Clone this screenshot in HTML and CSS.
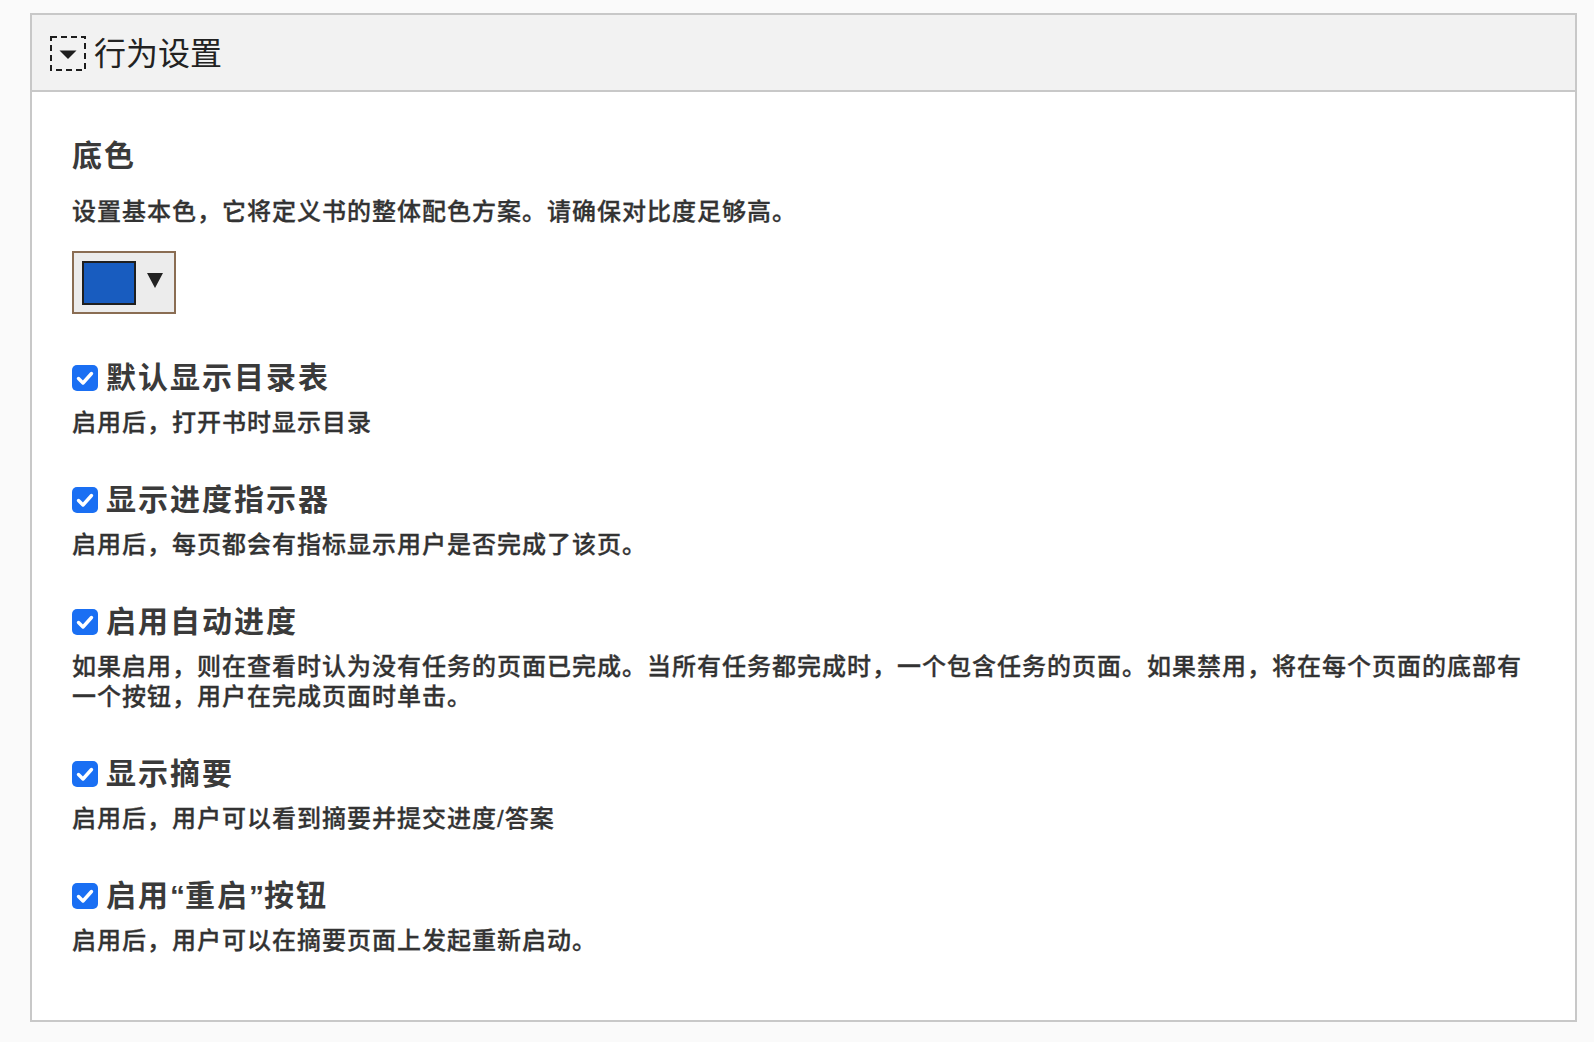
FILE: index.html
```html
<!DOCTYPE html>
<html lang="zh-CN">

<head>
    <meta charset="UTF-8">
    <meta name="viewport" content="width=device-width, initial-scale=1.0">
    <title>行为设置</title>
    <link rel="stylesheet" href="styles.css">
</head>

<body>
    <div class="panel">
        <div class="panelHead">
            <span class="toggle">
                <svg width="36" height="35" viewBox="0 0 36 35">
                    <rect x="1" y="1" width="34" height="33" fill="none" stroke="#1e1e1e" stroke-width="2" stroke-dasharray="6 4"></rect>
                    <path d="M9.5 14.5 L26.5 14.5 L18 23 Z" fill="#1e1e1e"></path>
                </svg>
            </span>
            <h1>行为设置</h1>
        </div>

        <div class="panelBody">
            <h2>底色</h2>
            <p class="desc">设置基本色，它将定义书的整体配色方案。请确保对比度足够高。</p>
            <button class="colorPick">
                <span class="swatch"></span>
                <span class="caret"></span>
            </button>

            <div class="option first">
                <label><span class="check"><svg width="26" height="26" viewBox="0 0 26 26"><path d="M6.5 13.5 L11 18 L19.5 8.5" fill="none" stroke="#fff" stroke-width="3.4" stroke-linecap="round" stroke-linejoin="round"></path></svg></span><span>默认显示目录表</span></label>
                <p class="desc">启用后，打开书时显示目录</p>
            </div>

            <div class="option">
                <label><span class="check"><svg width="26" height="26" viewBox="0 0 26 26"><path d="M6.5 13.5 L11 18 L19.5 8.5" fill="none" stroke="#fff" stroke-width="3.4" stroke-linecap="round" stroke-linejoin="round"></path></svg></span><span>显示进度指示器</span></label>
                <p class="desc">启用后，每页都会有指标显示用户是否完成了该页。</p>
            </div>

            <div class="option">
                <label><span class="check"><svg width="26" height="26" viewBox="0 0 26 26"><path d="M6.5 13.5 L11 18 L19.5 8.5" fill="none" stroke="#fff" stroke-width="3.4" stroke-linecap="round" stroke-linejoin="round"></path></svg></span><span>启用自动进度</span></label>
                <p class="desc">如果启用，则在查看时认为没有任务的页面已完成。当所有任务都完成时，一个包含任务的页面。如果禁用，将在每个页面的底部有一个按钮，用户在完成页面时单击。</p>
            </div>

            <div class="option">
                <label><span class="check"><svg width="26" height="26" viewBox="0 0 26 26"><path d="M6.5 13.5 L11 18 L19.5 8.5" fill="none" stroke="#fff" stroke-width="3.4" stroke-linecap="round" stroke-linejoin="round"></path></svg></span><span>显示摘要</span></label>
                <p class="desc">启用后，用户可以看到摘要并提交进度/答案</p>
            </div>

            <div class="option">
                <label><span class="check"><svg width="26" height="26" viewBox="0 0 26 26"><path d="M6.5 13.5 L11 18 L19.5 8.5" fill="none" stroke="#fff" stroke-width="3.4" stroke-linecap="round" stroke-linejoin="round"></path></svg></span><span>启用<span class="quote">“</span>重启<span class="quote">”</span>按钮</span></label>
                <p class="desc">启用后，用户可以在摘要页面上发起重新启动。</p>
            </div>
        </div>
    </div>
</body>

</html>
```

FILE: styles.css
```css
* {
    margin: 0;
    padding: 0;
    box-sizing: border-box;
}

body {
    font-family: "Liberation Sans", "Noto Sans CJK SC", sans-serif;
    background-color: #fafafa;
    color: #333;
    padding: 13px 17px 20px 30px;
}

.panel {
    border: 2px solid #c8c8c8;
    background-color: #fff;
}

.panelHead {
    display: flex;
    align-items: center;
    gap: 8px;
    height: 77px;
    padding-left: 18px;
    background-color: #f2f2f2;
    border-bottom: 2px solid #c8c8c8;
}

.toggle {
    display: flex;
    margin-top: 2px;
}

.panelHead h1 {
    font-size: 32px;
    font-weight: 400;
    line-height: 40px;
    margin-top: 2px;
    color: #222;
}

.panelBody {
    padding: 44px 40px 64px 40px;
}

.panelBody h2 {
    font-size: 30px;
    font-weight: 700;
    line-height: 40px;
    letter-spacing: 2px;
    color: #3a3a3a;
}

.desc {
    font-size: 24px;
    font-weight: 500;
    line-height: 30px;
    letter-spacing: 1px;
    color: #333;
    -webkit-text-stroke: 0.3px #333;
}

.panelBody h2 + .desc {
    margin-top: 21px;
}

.colorPick {
    display: flex;
    align-items: center;
    gap: 11px;
    width: 104px;
    height: 63px;
    margin-top: 24px;
    padding: 0 10px 0 8px;
    background-color: #ececec;
    border: 2px solid #8a6d53;
    cursor: pointer;
}

.swatch {
    width: 54px;
    height: 44px;
    background-color: #185cbf;
    border: 2px solid #1f1f1f;
}

.caret {
    width: 0;
    height: 0;
    margin-bottom: 4px;
    border-left: 8.5px solid transparent;
    border-right: 8.5px solid transparent;
    border-top: 15px solid #222;
}

.option {
    margin-top: 42px;
}

.option.first {
    margin-top: 44px;
}

.option label {
    display: flex;
    align-items: center;
    gap: 8px;
    font-size: 30px;
    font-weight: 700;
    line-height: 40px;
    letter-spacing: 2px;
    color: #3a3a3a;
    cursor: pointer;
}

.option label .quote {
    letter-spacing: 0;
}

.check {
    display: flex;
    width: 26px;
    height: 26px;
    border-radius: 5px;
    background-color: #1a6ff3;
}

.option .desc {
    margin-top: 10px;
}
```
